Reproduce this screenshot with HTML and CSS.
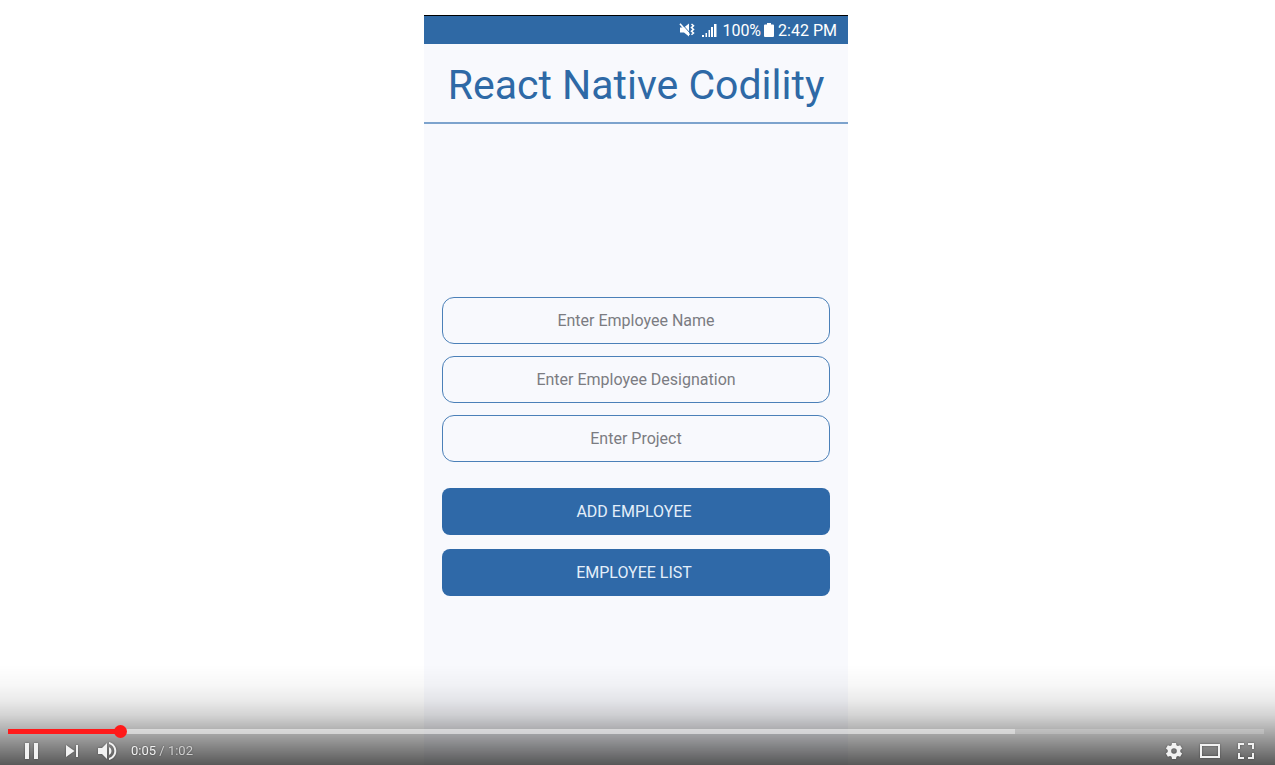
FILE: index.html
```html
<!DOCTYPE html>
<html lang="en">
<head>
<meta charset="utf-8">
<meta name="viewport" content="width=device-width, initial-scale=1">
<title>React Native Codility</title>
<link rel="stylesheet" href="styles.css">
</head>
<body>
<main class="stage">
  <section class="phone">
    <div class="status">
      <svg class="status-mute" viewBox="0 0 16 16" width="16" height="16" aria-hidden="true">
        <path d="M1 5.500h4L10 1.500v13L5 10.500H1z" fill="#fff"/>
        <path d="M2.200 1.200l9 10" stroke="#2f69a5" stroke-width="1"/>
        <path d="M1 1.800l9.500 11" stroke="#fff" stroke-width="1.600"/>
        <path d="M12.500 2l2 1.800-2 1.800 2 1.800-2 1.800 2 1.800-2 1.800" fill="none" stroke="#fff" stroke-width="1.500"/>
      </svg>
      <svg class="status-signal" viewBox="0 0 15 14" width="15" height="14" aria-hidden="true">
        <path d="M0 12h2v2H0zM3.500 10H5v4H3.500zM6.500 7H8v7H6.500zM9 4h2v10H9zM12 1h2.500v13H12z" fill="#fff"/>
      </svg>
      <span class="status-level">100%</span>
      <svg class="status-battery" viewBox="0 0 10 14" width="10" height="14" aria-hidden="true">
        <path d="M3 0h4v1.500h2q1 0 1 1V13q0 1-1 1H1q-1 0-1-1V2.500q0-1 1-1h2z" fill="#fff"/>
      </svg>
      <span>2:42 PM</span>
    </div>
    <h1 class="title">React Native Codility</h1>
    <form class="form">
      <input class="field" type="text" placeholder="Enter Employee Name" aria-label="Employee name">
      <input class="field" type="text" placeholder="Enter Employee Designation" aria-label="Employee designation">
      <input class="field" type="text" placeholder="Enter Project" aria-label="Project">
      <div class="actions">
        <button class="action" type="button">ADD EMPLOYEE</button>
        <button class="action" type="button">EMPLOYEE LIST</button>
      </div>
    </form>
  </section>
</main>
<div class="player">
  <input class="seek" type="range" min="0" max="62" step="0.01" value="5.3" aria-label="Seek">
  <div class="controls">
    <button class="control control-play" type="button" aria-label="Pause">
      <svg viewBox="0 0 36 36" width="36" height="36"><path d="M12 10h4v16h-4zM21 10h4v16h-4z"/></svg>
    </button>
    <button class="control" type="button" aria-label="Next">
      <svg viewBox="0 0 36 36" width="36" height="36"><path d="M12 12l8.500 6-8.500 6zM22 12h2v12h-2z"/></svg>
    </button>
    <button class="control" type="button" aria-label="Mute">
      <svg viewBox="0 0 36 36" width="36" height="36"><path d="M8 15h4l5-5v16l-5-5H8zM19 14c1.500.700 2.500 2.200 2.500 4s-1 3.300-2.500 4zM19 9c4.200.900 7.300 4.500 7.300 9s-3.100 8.100-7.300 9v-2.100c3.100-.900 5.300-3.600 5.300-6.900s-2.200-6-5.300-6.900z"/></svg>
    </button>
    <div class="time"><span class="elapsed">0:05</span> / 1:02</div>
    <div class="spacer"></div>
    <button class="control" type="button" aria-label="Settings">
      <svg viewBox="0 0 36 36" width="36" height="36"><path fill-rule="evenodd" d="M16 10h4l.400 2.200 1.500.900 2.200-.900 2 3.300-1.800 1.500v2l1.800 1.500-2 3.300-2.200-.900-1.500.900L20 26h-4l-.400-2.200-1.500-.900-2.200.900-2-3.300 1.800-1.500v-2l-1.800-1.500 2-3.300 2.200.900 1.500-.900zM18 15.200a2.800 2.800 0 1 0 0 5.600 2.800 2.800 0 0 0 0-5.600z"/></svg>
    </button>
    <button class="control" type="button" aria-label="Theater mode">
      <svg viewBox="0 0 36 36" width="36" height="36"><path fill-rule="evenodd" d="M8 11h20v14H8zM10 13v10h16V13z"/></svg>
    </button>
    <button class="control" type="button" aria-label="Full screen">
      <svg viewBox="0 0 36 36" width="36" height="36"><path d="M10 10h6v2h-4v4h-2zM20 10h6v6h-2v-4h-4zM10 20h2v4h4v2h-6zM24 20h2v6h-6v-2h4z"/></svg>
    </button>
  </div>
</div>
</body>
</html>
```
FILE: styles.css
```css
* {
  box-sizing: border-box;
}

body {
  margin: 0;
  background: #fff;
  font-family: Roboto, sans-serif;
}

.stage {
  display: flex;
  justify-content: center;
  min-height: 100vh;
  padding: 15px 3px 0 0;
}

.phone {
  display: flex;
  flex-direction: column;
  width: 33.3333%;
  min-width: 400px;
  background: #f8f9fd;
}

.status {
  display: flex;
  align-items: center;
  justify-content: flex-end;
  height: 29px;
  padding: 0 11px 0 0;
  border-top: 1px solid #000;
  background: #2f69a5;
  color: #fff;
  font-size: 16px;
}

.status-signal {
  margin: 0 5px 0 7px;
}

.status-battery {
  margin: 0 4px 0 3px;
}

.title {
  margin: 0;
  padding: 16px 0 12px;
  border-bottom: 2px solid #7da3cd;
  color: #2e69a6;
  font-size: 41px;
  font-weight: 400;
  line-height: 50px;
  text-align: center;
}

.form {
  display: flex;
  flex: 1;
  flex-direction: column;
  justify-content: center;
  gap: 12px;
  padding: 3px 18px 0;
}

.field {
  width: 100%;
  height: 47px;
  padding: 0 12px;
  border: 1px solid #4b80b8;
  border-radius: 12px;
  background: transparent;
  color: #333;
  font: 16px Roboto, sans-serif;
  text-align: center;
}

.field::placeholder {
  color: #7b7c82;
  opacity: 1;
}

.actions {
  display: grid;
  gap: 14px;
  padding-top: 14px;
}

.action {
  height: 47px;
  padding: 0 4px 0 0;
  border: 0;
  border-radius: 8px;
  background: #2f69a8;
  color: #e4effa;
  font: 16px Roboto, sans-serif;
}

.player {
  position: fixed;
  right: 0;
  bottom: 0;
  left: 0;
  padding-top: 60px;
  background: linear-gradient(rgba(0, 0, 0, 0) 0%, rgba(0, 0, 0, 0.03) 20%, rgba(0, 0, 0, 0.08) 35%, rgba(0, 0, 0, 0.17) 50%, rgba(0, 0, 0, 0.3) 64%, rgba(0, 0, 0, 0.46) 80%, rgba(0, 0, 0, 0.65) 100%);
}

.seek {
  display: block;
  width: calc(100% - 19px);
  height: 13px;
  margin: 0 11px 0 8px;
  appearance: none;
  background: linear-gradient(90deg, #ff1a1a 8.9%, rgba(255, 255, 255, 0.52) 8.9%, rgba(255, 255, 255, 0.52) 80.2%, rgba(255, 255, 255, 0.2) 80.2%) center / 100% 5px no-repeat;
}

.seek::-webkit-slider-thumb {
  width: 13px;
  height: 13px;
  appearance: none;
  border-radius: 50%;
  background: #ff1a1a;
}

.controls {
  display: flex;
  align-items: center;
  height: 27px;
  padding: 0 11px 1px 13px;
}

.control {
  display: block;
  width: 36px;
  height: 36px;
  padding: 0;
  border: 0;
  background: none;
}

.control-play {
  margin-right: 5px;
}

.control svg {
  display: block;
  fill: #f1f1f1;
  filter: drop-shadow(0 0 1px rgba(0, 0, 0, 0.4));
}

.time {
  padding: 0 0 2px 5px;
  color: #d0d0d0;
  font-size: 13px;
  text-shadow: 0 0 2px rgba(0, 0, 0, 0.5);
}

.elapsed {
  color: #f1f1f1;
}

.spacer {
  flex: 1;
}
```
